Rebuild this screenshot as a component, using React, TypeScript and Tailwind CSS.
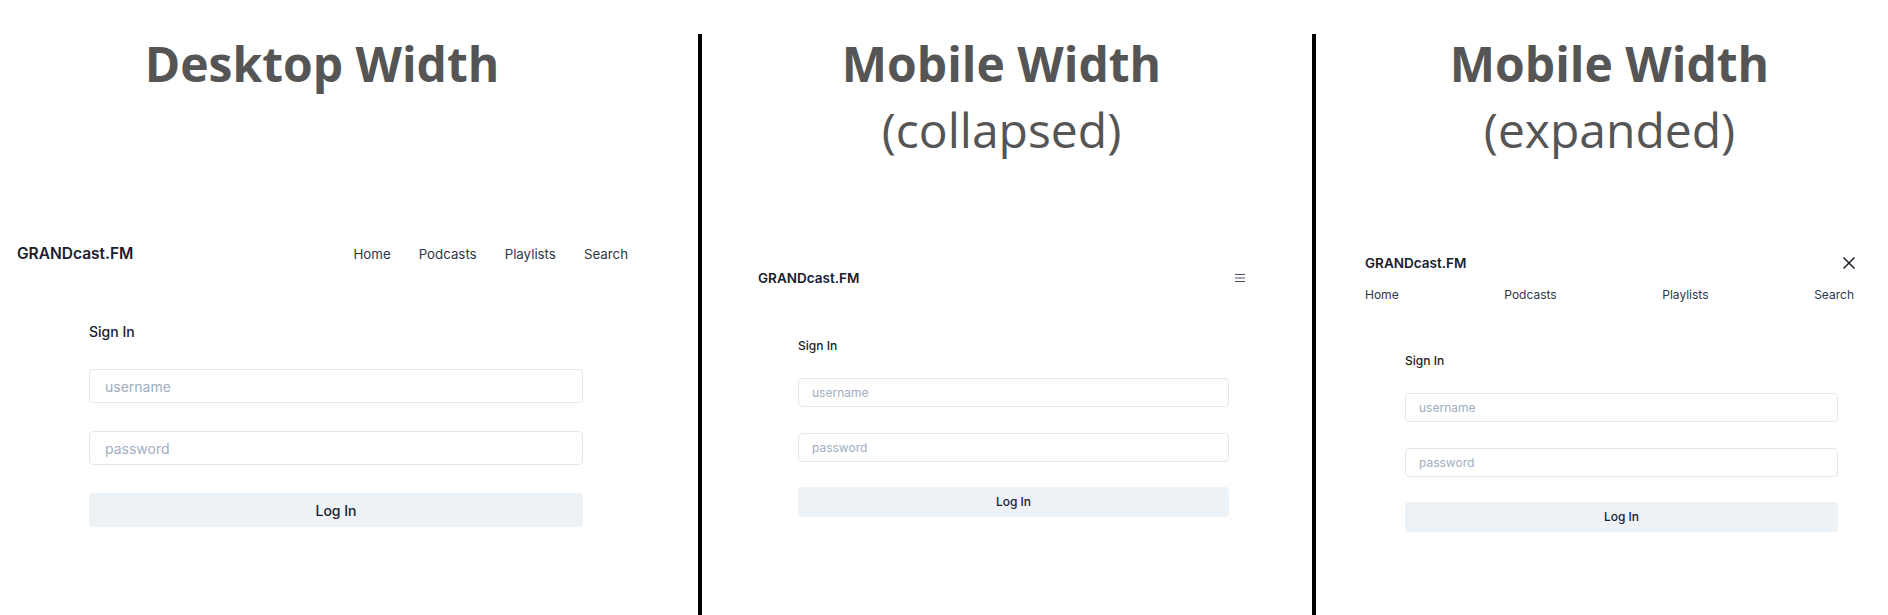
import React from "react";

const ui = { fontFamily: "Inter, 'Noto Sans', sans-serif" };
const head = { fontFamily: "'Open Sans', 'Noto Sans', sans-serif" };

function Field({ label, h, size, pl }: { label: string; h: string; size: string; pl: string }) {
  return (
    <div
      className={`${h} ${size} ${pl} flex items-center rounded-[4px] border border-[#e2e8f0] bg-white text-[#a0aec0]`}
    >
      {label}
    </div>
  );
}

function Hamburger() {
  return (
    <svg width="10" height="8" viewBox="0 0 10 8" fill="none">
      <path d="M0 0.5H10M0 4H10M0 7.5H10" stroke="#4a5568" strokeWidth="1" />
    </svg>
  );
}

function CloseIcon() {
  return (
    <svg width="14" height="12" viewBox="0 0 14 12" fill="none">
      <path d="M1.5 0.5L12.5 11.5M12.5 0.5L1.5 11.5" stroke="#1a202c" strokeWidth="1.5" />
    </svg>
  );
}

function MobileForm({ width }: { width: string }) {
  return (
    <div className={`ml-[40px] ${width} mt-[50px] flex flex-col`}>
      <div className="text-[12px] leading-[16px] font-medium text-[#1a202c]">Sign In</div>
      <div className="mt-[24px]">
        <Field label="username" h="h-[29px]" size="text-[12px]" pl="pl-[13px]" />
      </div>
      <div className="mt-[26px]">
        <Field label="password" h="h-[29px]" size="text-[12px]" pl="pl-[13px]" />
      </div>
      <div className="mt-[25px] h-[30px] rounded-[4px] bg-[#edf2f7] flex items-center justify-center text-[12px] font-medium text-[#1a202c]">
        Log In
      </div>
    </div>
  );
}

export default function App() {
  return (
    <div className="flex w-[1888px] h-[615px] bg-white overflow-hidden" style={ui}>
      {/* Column 1: desktop */}
      <div className="w-[698px] shrink-0 flex flex-col">
        <div
          className="w-[644px] pt-[31px] text-center text-[48px] leading-[66px] font-bold text-[#555555]"
          style={head}
        >
          Desktop Width
        </div>
        <div className="w-[645px] px-[17px] mt-[145px] flex items-baseline justify-between">
          <div className="text-[15.5px] leading-[24px] font-semibold text-[#1a202c]">GRANDcast.FM</div>
          <div className="flex gap-[28px] text-[13.3px] leading-[20px] text-[#2d3748]">
            <span>Home</span>
            <span>Podcasts</span>
            <span>Playlists</span>
            <span>Search</span>
          </div>
        </div>
        <div className="ml-[89px] w-[494px] mt-[56px] flex flex-col">
          <div className="text-[14px] leading-[20px] font-medium text-[#1a202c]">Sign In</div>
          <div className="mt-[27px]">
            <Field label="username" h="h-[34px]" size="text-[14px]" pl="pl-[15px]" />
          </div>
          <div className="mt-[28px]">
            <Field label="password" h="h-[34px]" size="text-[14px]" pl="pl-[15px]" />
          </div>
          <div className="mt-[28px] h-[34px] rounded-[4px] bg-[#edf2f7] flex items-center justify-center text-[14px] font-medium text-[#1a202c]">
            Log In
          </div>
        </div>
      </div>

      <div className="w-[4px] shrink-0 mt-[34px] bg-black" />

      {/* Column 2: mobile collapsed */}
      <div className="w-[610px] shrink-0 flex flex-col">
        <div className="w-[599px] pt-[31px] text-center text-[48px] leading-[66px] text-[#555555]" style={head}>
          <div className="font-bold">Mobile Width</div>
          <div className="font-normal">(collapsed)</div>
        </div>
        <div className="ml-[56px] w-[487px] mt-[105px] flex flex-col">
          <div className="h-[20px] flex items-center justify-between">
            <div className="text-[13.5px] leading-[20px] font-semibold text-[#1a202c]">GRANDcast.FM</div>
            <Hamburger />
          </div>
          <MobileForm width="w-[431px]" />
        </div>
      </div>

      <div className="w-[4px] shrink-0 mt-[34px] bg-black" />

      {/* Column 3: mobile expanded */}
      <div className="flex-1 flex flex-col">
        <div className="w-[572px] pl-[15px] pt-[31px] text-center text-[48px] leading-[66px] text-[#555555]" style={head}>
          <div className="font-bold">Mobile Width</div>
          <div className="font-normal">(expanded)</div>
        </div>
        <div className="ml-[49px] w-[491px] mt-[90px] flex flex-col">
          <div className="h-[20px] flex items-center justify-between">
            <div className="text-[13.5px] leading-[20px] font-semibold text-[#1a202c]">GRANDcast.FM</div>
            <CloseIcon />
          </div>
          <div className="mt-[14px] pr-[2px] flex justify-between text-[12px] leading-[16px] text-[#2d3748]">
            <span>Home</span>
            <span>Podcasts</span>
            <span>Playlists</span>
            <span>Search</span>
          </div>
          <MobileForm width="w-[433px]" />
        </div>
      </div>
    </div>
  );
}
